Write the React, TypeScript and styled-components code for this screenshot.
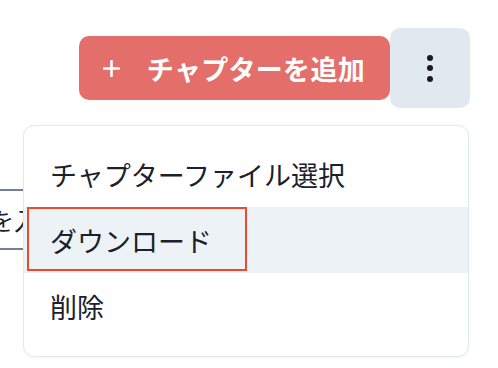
import React from "react";
import styled, { createGlobalStyle } from "styled-components";

const Global = createGlobalStyle`
  html, body {
    margin: 0;
    padding: 0;
    background: #ffffff;
    overflow: hidden;
  }
  body {
    font-family: "Noto Sans CJK JP", "Noto Sans", sans-serif;
    color: #1a202c;
  }
`;

const Page = styled.div`
  position: relative;
  width: 498px;
  height: 368px;
  overflow: hidden;
`;

const Toolbar = styled.div`
  display: flex;
  justify-content: flex-end;
  align-items: center;
  padding: 28px 28px 0 0;
`;

const AddButton = styled.button`
  display: flex;
  align-items: center;
  gap: 27px;
  height: 64px;
  padding: 0 25px 0 24px;
  border: none;
  border-radius: 10px;
  background: #e46f6a;
  color: #ffffff;
  font-family: "Noto Sans CJK JP", sans-serif;
  font-size: 27px;
  font-weight: 700;
  line-height: 1;
  letter-spacing: 0.3px;

  svg {
    flex-shrink: 0;
    display: block;
  }
`;

const MenuAnchor = styled.div`
  position: relative;
`;

const KebabButton = styled.button`
  display: flex;
  flex-direction: column;
  align-items: center;
  justify-content: center;
  gap: 4.5px;
  width: 80px;
  height: 80px;
  border: none;
  border-radius: 10px;
  background: #e2e8f0;
  padding: 0;
`;

const Dot = styled.span`
  width: 6px;
  height: 6px;
  border-radius: 50%;
  background: #171923;
`;

const Menu = styled.div`
  position: absolute;
  top: calc(100% + 17px);
  right: 1px;
  width: 446px;
  box-sizing: border-box;
  padding: 15px 0 17px;
  background: #ffffff;
  border: 1.5px solid #e2e8f0;
  border-radius: 11px;
  box-shadow: 0 1px 3px rgba(0, 0, 0, 0.04);
  z-index: 2;
`;

const Item = styled.div<{ $active?: boolean }>`
  position: relative;
  display: flex;
  align-items: center;
  height: 66px;
  padding-left: 26px;
  background: ${(p) => (p.$active ? "#edf2f7" : "transparent")};
  color: #1a202c;
  font-size: 27px;
  line-height: 1;
`;

const Annotation = styled.span`
  position: absolute;
  left: 3px;
  top: 0;
  width: 220px;
  height: 64px;
  box-sizing: border-box;
  border: 2.5px solid #ea4a2e;
  pointer-events: none;
`;

const Field = styled.div`
  display: flex;
  align-items: center;
  width: 200px;
  height: 61px;
  box-sizing: border-box;
  margin: 81px 0 0 -34px;
  border-top: 2px solid #718096;
  border-bottom: 2px solid #718096;
  font-size: 24px;
  color: #1a202c;
  white-space: nowrap;
`;

const PlusIcon = () => (
  <svg width="17" height="17" viewBox="0 0 17 17" aria-hidden="true">
    <path d="M8.5 1v15M1 8.5h15" stroke="#ffffff" strokeWidth="2.6" strokeLinecap="round" />
  </svg>
);

export default function App() {
  return (
    <Page>
      <Global />
      <Toolbar>
        <AddButton>
          <PlusIcon />
          <span>チャプターを追加</span>
        </AddButton>
        <MenuAnchor>
          <KebabButton aria-label="menu">
            <Dot />
            <Dot />
            <Dot />
          </KebabButton>
          <Menu>
            <Item>チャプターファイル選択</Item>
            <Item $active>
              <Annotation />
              ダウンロード
            </Item>
            <Item>削除</Item>
          </Menu>
        </MenuAnchor>
      </Toolbar>
      <Field>名を入力</Field>
    </Page>
  );
}
